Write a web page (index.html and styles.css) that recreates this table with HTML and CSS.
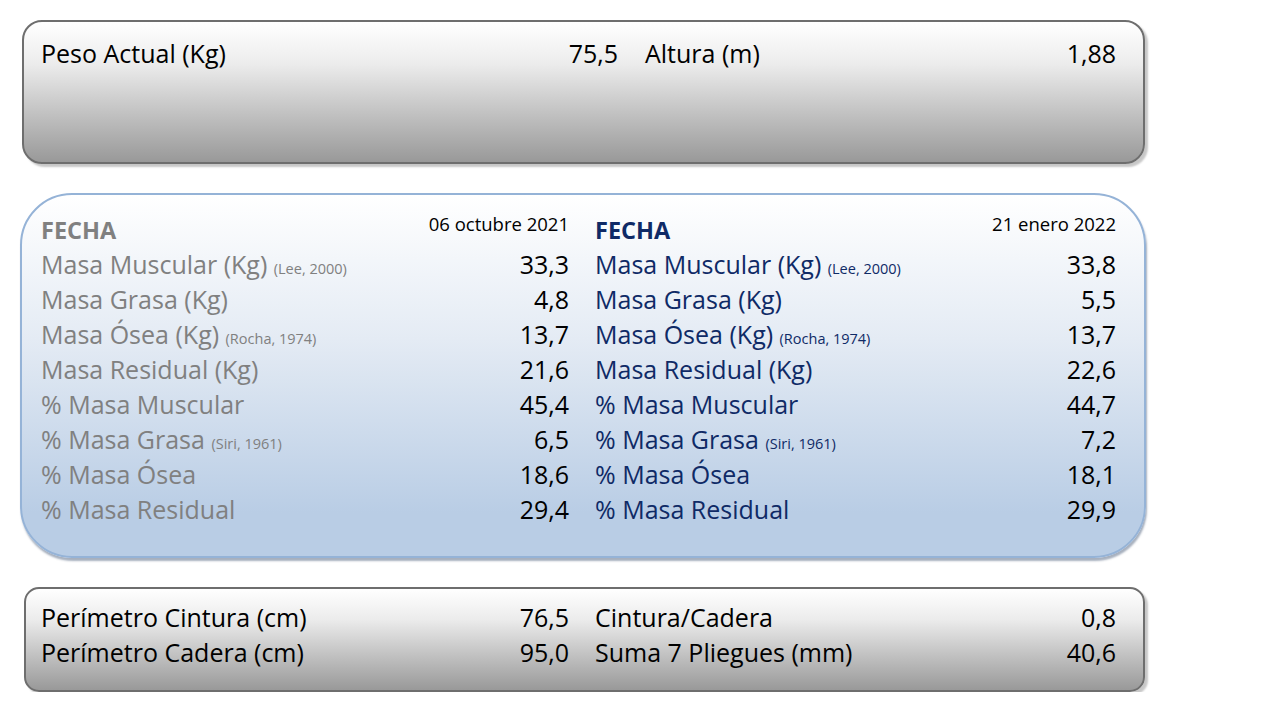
FILE: index.html
```html
<!DOCTYPE html>
<html lang="es">
<head>
<meta charset="utf-8">
<title>Composición corporal</title>
<link rel="stylesheet" href="styles.css">
</head>
<body>
<div class="page">
  <section class="card card-gray card-top">
    <div class="cols cols-top">
      <div class="row"><span>Peso Actual (Kg)</span><span>75,5</span></div>
      <div class="row"><span>Altura (m)</span><span>1,88</span></div>
    </div>
  </section>

  <section class="card card-blue">
    <div class="cols">
      <div class="col col-old">
        <div class="row head"><span class="fecha">FECHA</span><span class="date">06 octubre 2021</span></div>
        <div class="row"><span>Masa Muscular (Kg) <small>(Lee, 2000)</small></span><span class="val">33,3</span></div>
        <div class="row"><span>Masa Grasa (Kg)</span><span class="val">4,8</span></div>
        <div class="row"><span>Masa Ósea (Kg) <small>(Rocha, 1974)</small></span><span class="val">13,7</span></div>
        <div class="row"><span>Masa Residual (Kg)</span><span class="val">21,6</span></div>
        <div class="row"><span>% Masa Muscular</span><span class="val">45,4</span></div>
        <div class="row"><span>% Masa Grasa <small>(Siri, 1961)</small></span><span class="val">6,5</span></div>
        <div class="row"><span>% Masa Ósea</span><span class="val">18,6</span></div>
        <div class="row"><span>% Masa Residual</span><span class="val">29,4</span></div>
      </div>
      <div class="col col-new">
        <div class="row head"><span class="fecha">FECHA</span><span class="date">21 enero 2022</span></div>
        <div class="row"><span>Masa Muscular (Kg) <small>(Lee, 2000)</small></span><span class="val">33,8</span></div>
        <div class="row"><span>Masa Grasa (Kg)</span><span class="val">5,5</span></div>
        <div class="row"><span>Masa Ósea (Kg) <small>(Rocha, 1974)</small></span><span class="val">13,7</span></div>
        <div class="row"><span>Masa Residual (Kg)</span><span class="val">22,6</span></div>
        <div class="row"><span>% Masa Muscular</span><span class="val">44,7</span></div>
        <div class="row"><span>% Masa Grasa <small>(Siri, 1961)</small></span><span class="val">7,2</span></div>
        <div class="row"><span>% Masa Ósea</span><span class="val">18,1</span></div>
        <div class="row"><span>% Masa Residual</span><span class="val">29,9</span></div>
      </div>
    </div>
  </section>

  <section class="card card-gray card-bottom">
    <div class="cols">
      <div class="col">
        <div class="row"><span>Perímetro Cintura (cm)</span><span>76,5</span></div>
        <div class="row"><span>Perímetro Cadera (cm)</span><span>95,0</span></div>
      </div>
      <div class="col">
        <div class="row"><span>Cintura/Cadera</span><span>0,8</span></div>
        <div class="row"><span>Suma 7 Pliegues (mm)</span><span>40,6</span></div>
      </div>
    </div>
  </section>
</div>
</body>
</html>
```

FILE: styles.css
```css
* { box-sizing: border-box; }

html, body {
  margin: 0;
  padding: 0;
  background: #ffffff;
}

body {
  font-family: "Open Sans", Lato, "Liberation Sans", sans-serif;
  font-size: 25px;
  color: #000000;
}

.page {
  display: flex;
  flex-direction: column;
  padding-top: 20px;
  width: 1160px;
}

.card {
  border-width: 2px;
  border-style: solid;
}

.card-gray {
  border-color: #6e6e6e;
  background: linear-gradient(to bottom, #ffffff 0%, #ececec 30%, #c2c2c2 65%, #999999 100%);
  box-shadow: 3px 3px 2px rgba(0, 0, 0, 0.22);
}

.card-top {
  margin-left: 22px;
  width: 1123px;
  height: 144px;
  border-radius: 20px;
  padding: 14px 28px 0 17px;
}

.card-blue {
  margin-top: 29px;
  margin-left: 20px;
  width: 1126px;
  height: 365px;
  border-color: #95b3d7;
  border-radius: 52px;
  padding: 18px 28px 0 19px;
  background: linear-gradient(to bottom, #ffffff 0%, #e4ebf4 40%, #b9cde5 88%, #b9cde5 100%);
  box-shadow: 1px 3px 2px rgba(60, 80, 110, 0.45);
}

.card-bottom {
  margin-top: 29px;
  margin-left: 24px;
  width: 1121px;
  height: 105px;
  border-radius: 15px;
  padding: 11px 27px 0 15px;
}

.cols {
  display: grid;
  grid-template-columns: 528px 521px;
  column-gap: 26px;
}

.cols-top {
  grid-template-columns: 577px 471px;
  column-gap: 27px;
}

.col {
  display: flex;
  flex-direction: column;
}

.row {
  display: flex;
  justify-content: space-between;
  align-items: flex-start;
  line-height: 35px;
  height: 35px;
  white-space: nowrap;
}

.row.head {
  height: 34px;
  line-height: 34px;
}

.fecha {
  font-weight: 700;
  font-size: 23.5px;
}

.date {
  font-size: 18.5px;
  line-height: 21px;
  color: #000000;
}

small {
  font-size: 14.5px;
}

.col-old {
  color: #808080;
}

.col-new {
  color: #0f2a66;
}

.val {
  color: #000000;
}
```
